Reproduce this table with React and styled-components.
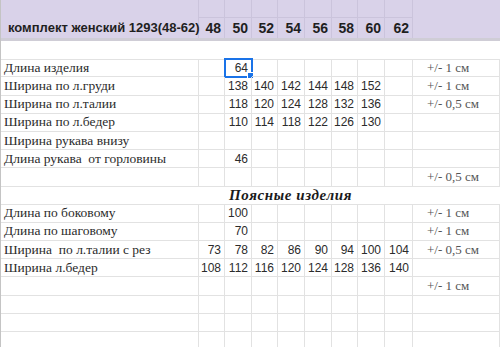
import React from "react";
import styled, { createGlobalStyle } from "styled-components";

const GlobalStyle = createGlobalStyle`
	html, body {
		margin: 0;
		padding: 0;
		background: #ffffff;
	}
	body {
		width: 500px;
		height: 347px;
		overflow: hidden;
	}
`;

const COLUMNS = "198px 26px 27px 26px 27px 27px 26px 27px 28px 1fr";
const LINE = "#e2e2e2";

const Page = styled.div`
	width: 500px;
	height: 347px;
	overflow: hidden;
	border-left: 1px solid #c4c4c4;
	box-sizing: border-box;
`;

const Header = styled.div`
	display: grid;
	grid-template-columns: ${COLUMNS};
	grid-template-rows: 18px 20px;
	background: #d9d2e9;
	border-bottom: 3px solid #cfcdd6;
`;

const HeadCell = styled.div`
	box-sizing: border-box;
	display: flex;
	align-items: center;
	justify-content: ${(p) => (p.$left ? "flex-start" : "flex-end")};
	padding: ${(p) => (p.$left ? "0 0 0 7px" : "0 3px 0 0")};
	border-right: ${(p) => (p.$last ? "none" : "1px solid #cbc4dc")};
	border-bottom: ${(p) => (p.$row === 1 ? "1px solid #cbc4dc" : "none")};
	grid-column: ${(p) => p.$col};
	grid-row: ${(p) => (p.$row === 0 ? "1 / span 2" : p.$row)};
	font-family: "Liberation Sans", Arial, sans-serif;
	font-weight: bold;
	font-size: ${(p) => (p.$left ? "13px" : "14px")};
	color: #1f1f1f;
	white-space: nowrap;
`;

const Title = styled.span`
	align-self: flex-end;
	padding-bottom: 1px;
	line-height: 19px;
`;

const Sheet = styled.div`
	display: grid;
	grid-template-columns: ${COLUMNS};
	grid-auto-rows: 18.2px;
`;

const Cell = styled.div`
	position: relative;
	box-sizing: border-box;
	display: flex;
	align-items: center;
	justify-content: ${(p) => (p.$kind === "num" ? "flex-end" : "flex-start")};
	padding: ${(p) =>
		p.$kind === "num" ? "0 3px 0 0" : p.$kind === "tol" ? "0 0 0 14px" : "0 0 0 3px"};
	border-right: 1px solid ${LINE};
	border-bottom: 1px solid ${LINE};
	font-family: ${(p) =>
		p.$kind === "num"
			? `"Liberation Sans", Arial, sans-serif`
			: `"Liberation Serif", "Times New Roman", serif`};
	font-size: ${(p) => (p.$kind === "num" ? "12px" : p.$kind === "tol" ? "13px" : "13.5px")};
	color: ${(p) => (p.$kind === "tol" ? "#555555" : "#2b2b2b")};
	white-space: pre;
	overflow: visible;

	${(p) =>
		p.$selected &&
		`
		outline: 2px solid #1a73e8;
		outline-offset: -1px;
		&::after {
			content: "";
			position: absolute;
			right: -3px;
			bottom: -3px;
			width: 5px;
			height: 5px;
			background: #1a73e8;
			border: 1px solid #ffffff;
		}
	`}
`;

const WideRow = styled.div`
	grid-column: 1 / -1;
	box-sizing: border-box;
	border-bottom: 1px solid ${LINE};
	display: flex;
	align-items: center;
	padding-left: ${(p) => p.$indent || 0}px;
	font-family: "Liberation Serif", "Times New Roman", serif;
	font-weight: bold;
	font-style: italic;
	font-size: 15px;
	letter-spacing: 0.6px;
	color: #1a1a1a;
`;

const sizes = ["48", "50", "52", "54", "56", "58", "60", "62"];

const topRows = [
	{ label: "Длина изделия", vals: ["", "64"], tol: "+/- 1 см", selected: 1 },
	{ label: "Ширина по л.груди", vals: ["", "138", "140", "142", "144", "148", "152"], tol: "+/- 1 см" },
	{ label: "Ширина по л.талии", vals: ["", "118", "120", "124", "128", "132", "136"], tol: "+/- 0,5 см" },
	{ label: "Ширина по л.бедер", vals: ["", "110", "114", "118", "122", "126", "130"] },
	{ label: "Ширина рукава внизу" },
	{ label: "Длина рукава  от горловины", vals: ["", "46"] },
	{ tol: "+/- 0,5 см" },
];

const bottomRows = [
	{ label: "Длина по боковому", vals: ["", "100"], tol: "+/- 1 см" },
	{ label: "Длина по шаговому", vals: ["", "70"], tol: "+/- 1 см" },
	{ label: "Ширина  по л.талии с рез", vals: ["73", "78", "82", "86", "90", "94", "100", "104"], tol: "+/- 0,5 см" },
	{ label: "Ширина л.бедер", vals: ["108", "112", "116", "120", "124", "128", "136", "140"] },
	{ tol: "+/- 1 см" },
	{},
	{},
	{},
];

const Row = ({ row }) => {
	const vals = row.vals || [];
	return (
		<>
			<Cell $kind="label">{row.label || ""}</Cell>
			{sizes.map((s, i) => (
				<Cell key={s} $kind="num" $selected={row.selected === i}>
					{vals[i] || ""}
				</Cell>
			))}
			<Cell $kind="tol">{row.tol || ""}</Cell>
		</>
	);
};

const App = () => {
	return (
		<Page>
			<GlobalStyle />
			<Header>
				<HeadCell $left $row={0} $col={1}>
					<Title>комплект женский 1293(48-62)</Title>
				</HeadCell>
				{sizes.map((s, i) => (
					<HeadCell key={"t" + s} $row={1} $col={i + 2} />
				))}
				{sizes.map((s, i) => (
					<HeadCell key={s} $row={2} $col={i + 2}>
						{s}
					</HeadCell>
				))}
				<HeadCell $last $row={0} $col={10} />
			</Header>
			<Sheet>
				<WideRow style={{ height: 19 }} />
				{topRows.map((r, i) => (
					<Row key={"a" + i} row={r} />
				))}
				<WideRow $indent={228}>Поясные изделия</WideRow>
				{bottomRows.map((r, i) => (
					<Row key={"b" + i} row={r} />
				))}
			</Sheet>
		</Page>
	);
};

export default App;
